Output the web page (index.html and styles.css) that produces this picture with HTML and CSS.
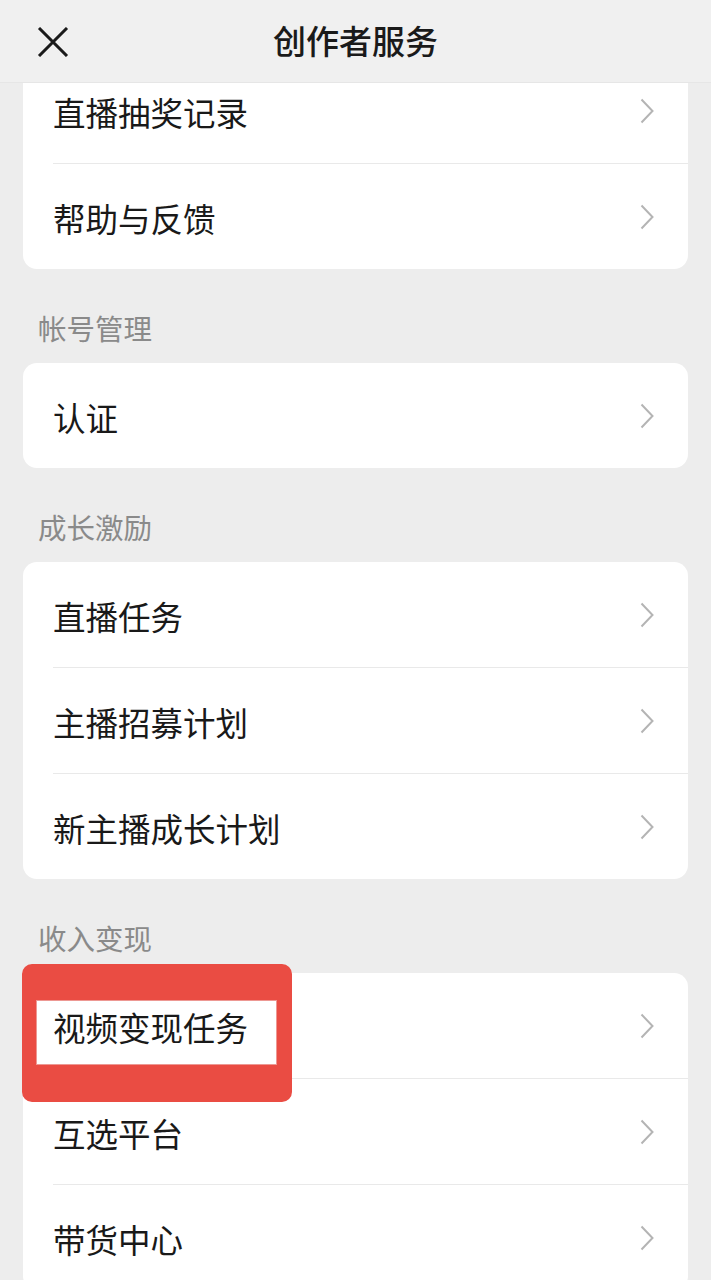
FILE: index.html
```html
<!doctype html>
<html>
<head>
<meta charset="utf-8">
<title>创作者服务</title>
<link rel="stylesheet" href="styles.css">
</head>
<body>
<div class="topbar">
	<span class="close">
		<svg width="32" height="30" viewBox="0 0 32 30"><path d="M2 1 L30 29 M30 1 L2 29" stroke="#1a1a1a" stroke-width="3" fill="none"/></svg>
	</span>
	<h1 class="title">创作者服务</h1>
	<span></span>
</div>
<div class="content">
	<!--第一组，上半部分被顶栏遮住-->
	<div class="card card-first">
		<div class="row"><span class="row-text">直播抽奖记录</span><span class="arrow"><svg width="14" height="26" viewBox="0 0 14 26"><polyline points="1.5,1.5 12.5,13 1.5,24.5" stroke="#b4b4b4" stroke-width="2" fill="none"/></svg></span></div>
		<div class="row"><span class="row-text">帮助与反馈</span><span class="arrow"><svg width="14" height="26" viewBox="0 0 14 26"><polyline points="1.5,1.5 12.5,13 1.5,24.5" stroke="#b4b4b4" stroke-width="2" fill="none"/></svg></span></div>
	</div>

	<div class="group-title">帐号管理</div>
	<div class="card">
		<div class="row"><span class="row-text">认证</span><span class="arrow"><svg width="14" height="26" viewBox="0 0 14 26"><polyline points="1.5,1.5 12.5,13 1.5,24.5" stroke="#b4b4b4" stroke-width="2" fill="none"/></svg></span></div>
	</div>

	<div class="group-title">成长激励</div>
	<div class="card">
		<div class="row"><span class="row-text">直播任务</span><span class="arrow"><svg width="14" height="26" viewBox="0 0 14 26"><polyline points="1.5,1.5 12.5,13 1.5,24.5" stroke="#b4b4b4" stroke-width="2" fill="none"/></svg></span></div>
		<div class="row"><span class="row-text">主播招募计划</span><span class="arrow"><svg width="14" height="26" viewBox="0 0 14 26"><polyline points="1.5,1.5 12.5,13 1.5,24.5" stroke="#b4b4b4" stroke-width="2" fill="none"/></svg></span></div>
		<div class="row"><span class="row-text">新主播成长计划</span><span class="arrow"><svg width="14" height="26" viewBox="0 0 14 26"><polyline points="1.5,1.5 12.5,13 1.5,24.5" stroke="#b4b4b4" stroke-width="2" fill="none"/></svg></span></div>
	</div>

	<div class="group-title">收入变现</div>
	<div class="card">
		<div class="row">
			<span class="mark"></span>
			<span class="row-text">视频变现任务</span><span class="arrow"><svg width="14" height="26" viewBox="0 0 14 26"><polyline points="1.5,1.5 12.5,13 1.5,24.5" stroke="#b4b4b4" stroke-width="2" fill="none"/></svg></span>
		</div>
		<div class="row"><span class="row-text">互选平台</span><span class="arrow"><svg width="14" height="26" viewBox="0 0 14 26"><polyline points="1.5,1.5 12.5,13 1.5,24.5" stroke="#b4b4b4" stroke-width="2" fill="none"/></svg></span></div>
		<div class="row"><span class="row-text">带货中心</span><span class="arrow"><svg width="14" height="26" viewBox="0 0 14 26"><polyline points="1.5,1.5 12.5,13 1.5,24.5" stroke="#b4b4b4" stroke-width="2" fill="none"/></svg></span></div>
	</div>
</div>
</body>
</html>
```

FILE: styles.css
```css
body
{
	margin: 0;
	height: 1280px;
	overflow: hidden;
	background-color: #ededed;
	font-family: "Noto Sans CJK SC", "Noto Sans", sans-serif;
	color: #191919;
}
/*顶栏*/
.topbar
{
	position: relative;
	z-index: 2;
	height: 83px;
	display: grid;
	grid-template-columns: 1fr auto 1fr;
	align-items: center;
	background-color: #f0f0f0;
	border-bottom: 1px solid #e6e6e6;
	box-sizing: border-box;
}
.close
{
	display: flex;
	padding-left: 37px;
	padding-top: 2px;
}
.title
{
	margin: 0;
	font-size: 33px;
	font-weight: 500;
	line-height: 40px;
	color: #1a1a1a;
	padding-bottom: 2px;
}
/*内容*/
.content
{
	padding: 0 23px;
}
.card
{
	background-color: #fff;
	border-radius: 14px;
}
.card-first
{
	margin-top: -25px;
}
.row
{
	position: relative;
	height: 105px;
	margin-left: 30px;
	padding-right: 34px;
	display: flex;
	align-items: center;
	justify-content: space-between;
}
.row + .row
{
	border-top: 1px solid #e9e9e9;
}
.row-text
{
	font-size: 32.5px;
	line-height: 40px;
	padding-top: 2px;
}
.arrow
{
	display: flex;
}
.group-title
{
	margin: 41px 0 17px 15px;
	font-size: 28.5px;
	line-height: 36px;
	color: #8a8a8a;
}
/*红色圈画标记*/
.mark
{
	position: absolute;
	z-index: 1;
	left: -31px;
	top: -9px;
	width: 241px;
	height: 65px;
	border-style: solid;
	border-color: #ea4c43;
	border-width: 36px 15px 37px 14px;
	border-radius: 10px;
	box-shadow: inset 0 0 0 1px rgba(220, 50, 40, 0.5);
}
```
